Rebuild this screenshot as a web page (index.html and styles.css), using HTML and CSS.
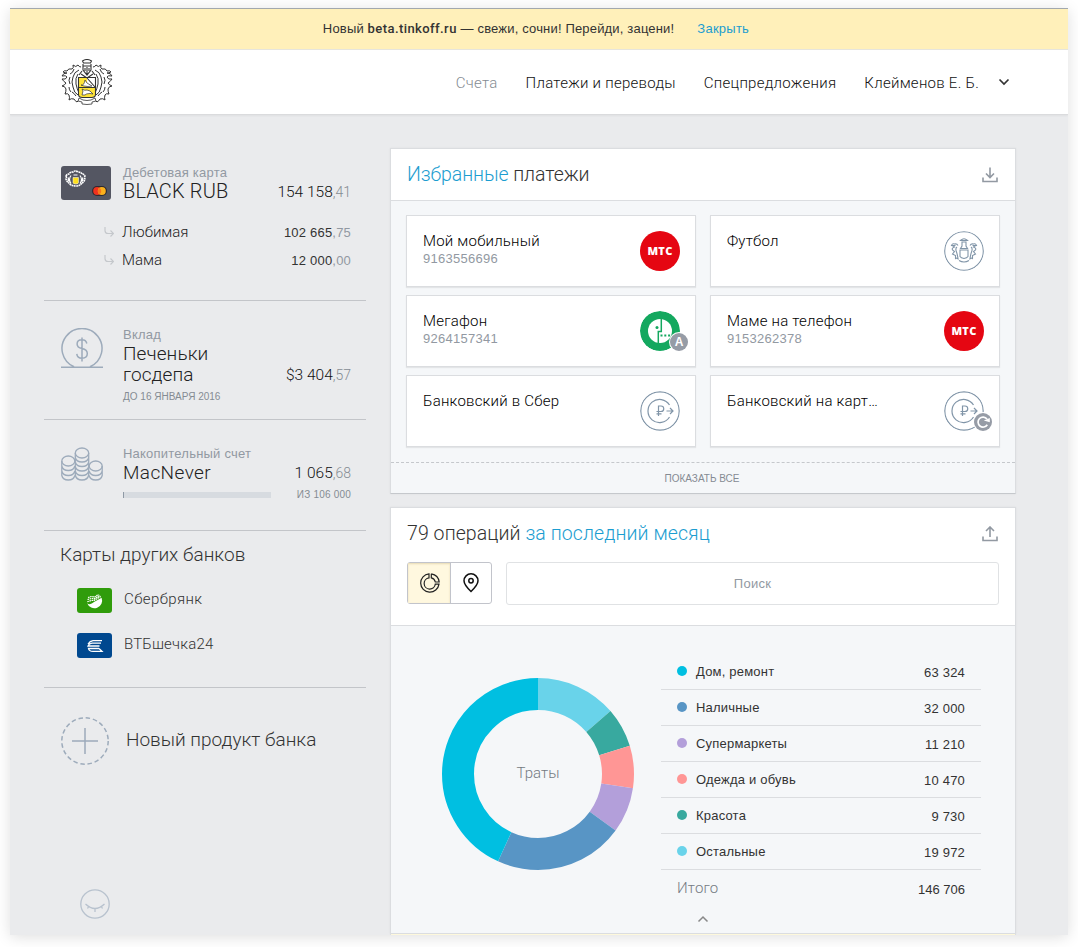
FILE: index.html
```html
<!DOCTYPE html>
<html lang="ru">
<head>
<meta charset="utf-8">
<title>Тинькофф</title>
<link rel="stylesheet" href="styles.css">
</head>
<body>
<svg class="defs" width="0" height="0">
  <symbol id="crest" viewBox="0 0 52 46">
    <g id="crest-wing" fill="none" stroke="currentColor" stroke-width="1">
      <path d="M20 8q-2 0-3-2q-2 3-5 0q1 3-1 4q-4-1-5 2q-3-1-4 1q3 1 4 1q-4 0-5 3q4-1 5 1q-1 3-5 2q2 3 4 4q-1 2-4 3q3 0 4 3q0 3-1 5q3-1 4 1q1 3 0 5q2-2 5-1q1 2 3 3l3-3"/>
      <path d="M18 11q-5 2-6 7q-2 5 0 10q1 6 5 8M17 15q-3 4-2 10q1 5 3 9M13 10q-1 4-4 5M9 18q-2 3 0 7M8 28q0 3 2 5M15 37q-2-3-4-4"/>
    </g>
    <use href="#crest-wing" transform="matrix(-1 0 0 1 52 0)"/>
    <g fill="none" stroke="currentColor" stroke-width="1.100">
      <path d="M21.500 2q4.500-3 9 0l-1 2h-7zM22 5v6l4 5l4-5V5M22 7h8M24 9v3M28 9v3M26 8v8M21 12l-3 4M31 12l3 4M20 15l6 4l6-4"/>
    </g>
    <path d="M17.500 18.500h17v17q0 3-4 3h-9q-4 0-4-3z" fill="#fff"/>
    <path d="M18 19h8v9h8v8q0 2-4 2h-8q-4 0-4-2z" fill="#ffe43a"/>
    <path d="M17.500 18.500h17v17q0 3-4 3h-9q-4 0-4-3zM18 28.500h16M26 19l8 9" fill="none" stroke="currentColor" stroke-width="1.100"/>
    <path d="M20 26q3 1 4-5l2 3l5 3q-4 1-8 0zM21 36l1-4l-1-2q3 2 5 1l3 1l3 3l-3-.5q-4 0-5 1.500z" fill="#fff" stroke="currentColor" stroke-width=".7"/>
    <path d="M18 39l-1 3l4 1v2q5 1 10 0v-2l4-1l-1-3l-4 2q-4 1-8 0z" fill="#fff" stroke="currentColor" stroke-width=".8"/>
  </symbol>
  <symbol id="crest-small" viewBox="0 0 21 17">
    <path d="M1 6q1-2 3-2q1-2 4-2q2-2 5 0q3 0 4 2q2 0 3 2q-1 2 0 3q-1 3-3 4q-2 3-6 3q-5 0-7-3q-2-1-3-4q1-1 0-3z" fill="none" stroke="#fff" stroke-width="1.600" stroke-dasharray="1.800 .5"/>
    <path d="M6 5.500q-3 4 0 8M15 5.500q3 4 0 8M8.500 5h4M3.500 7.500q-.8 2 .5 4M17.500 7.500q.8 2-.5 4" fill="none" stroke="#fff" stroke-width="1.200"/>
    <path d="M8 7.500h5.500v5q0 1.500-2.750 1.500T8 12.500z" fill="#ffe01e" stroke="#fff" stroke-width=".5"/>
  </symbol>
  <symbol id="crest-line" viewBox="0 0 40 40">
    <g fill="none" stroke="#8195a8" stroke-width="1.100">
      <circle cx="20" cy="20" r="19.300"/>
      <path d="M16.500 9.500q3.500-3.500 7 0zM18 11h4v4l1.500 2.500h-7L18 15zM16 19h8v6.500q-1 1.500-4 2q-3-.5-4-2zM15 29.500q5 3 10 0"/>
      <g id="wing-line"><path d="M14 14.500q-1-2-3.500-1.500q-2-1-3 1.500q2 .5 3 1.500q-3 1-2 3l2 1.500l-2 2.500l3 1.500v3q2-1 3 1M13 16q-2 1.500-.5 5q1 3 1.500 6.500M8 14.500h3.500"/></g>
      <use href="#wing-line" transform="matrix(-1 0 0 1 40 0)"/>
    </g>
  </symbol>
  <symbol id="transfer" viewBox="0 0 40 40">
    <g fill="none" stroke="#8195a8" stroke-width="1.200">
      <circle cx="20" cy="20" r="19.200"/>
      <path d="M29.500 14a11.600 11.600 0 1 0 0 12M18.500 25V15h2.500a2.700 2.700 0 0 1 0 5.500h-4.500M16.500 22.800h5M26.500 20h6M30 17l3 3l-3 3"/>
    </g>
  </symbol>
  <symbol id="sub-arrow" viewBox="0 0 10 10">
    <path d="M1 0v3.500q0 3 3 3h5M6.500 3.500l3 3l-3 3" fill="none" stroke="#c5c8cc" stroke-width="1.200"/>
  </symbol>
</svg>

<div class="frame">
  <div class="banner">
    <span class="banner-text">Новый <b>beta.tinkoff.ru</b> — свежи, сочни! Перейди, зацени!</span>
    <a class="banner-close">Закрыть</a>
  </div>
  <header class="header">
    <svg class="logo"><use href="#crest"/></svg>
    <nav class="nav">
      <a class="current">Счета</a><a>Платежи и переводы</a><a>Спецпредложения</a><a>Клейменов Е. Б.</a>
      <svg class="nav-arrow" viewBox="0 0 12 8"><path d="M1.500 1.500L6 6l4.500-4.500" fill="none" stroke="#333" stroke-width="1.700"/></svg>
    </nav>
  </header>

  <div class="content">
    <aside class="sidebar">
      <section class="acc acc-card">
        <div class="acc-main">
          <div class="acc-icon"><div class="card"><svg class="card-crest"><use href="#crest-small"/></svg><svg class="card-mc" viewBox="0 0 15 10"><rect width="15" height="10" rx="5" fill="#2e2a30"/><circle cx="5.200" cy="5" r="4" fill="#f0321e"/><circle cx="9.800" cy="5" r="4" fill="#fbb01c"/><path d="M7.500 1.700a4 4 0 0 1 0 6.600a4 4 0 0 1 0-6.600" fill="#f9751c"/></svg></div></div>
          <div class="acc-body"><div class="label">Дебетовая карта</div><div class="name latin black">BLACK RUB</div></div>
          <div class="amount">154 158<i>,41</i></div>
        </div>
        <div class="sub"><svg><use href="#sub-arrow"/></svg><span>Любимая</span><b>102 665<i>,75</i></b></div>
        <div class="sub"><svg><use href="#sub-arrow"/></svg><span>Мама</span><b>12 000<i>,00</i></b></div>
      </section>

      <section class="acc acc-deposit">
        <div class="acc-main">
          <div class="acc-icon"><svg width="42" height="42" viewBox="0 0 42 42" fill="none" stroke="#9dabbb" stroke-width="1.500"><path d="M0 39.200h42M13 38.800a20 20 0 1 1 16 0M25.800 15.500q-.8-3.700-4.800-3.700q-4.900 0-4.900 4.200q0 3.500 4.900 4.600q5.300 1.200 5.300 5q0 4.700-5.300 4.700q-4.800 0-5.200-4.400M21 9.500v24"/></svg></div>
          <div class="acc-body"><div class="label">Вклад</div><div class="name">Печеньки<br>госдепа</div></div>
          <div class="amount">$3 404<i>,57</i></div>
        </div>
        <div class="note">ДО 16 ЯНВАРЯ 2016</div>
      </section>

      <section class="acc acc-saving">
        <div class="acc-main">
          <div class="acc-icon"><svg width="42" height="34" viewBox="0 0 42 34" fill="none" stroke="#9dabbb" stroke-width="1.300">
            <ellipse cx="21" cy="6" rx="6.700" ry="5"/><ellipse cx="7.300" cy="14" rx="6.500" ry="5"/><ellipse cx="34.700" cy="19" rx="6.500" ry="5"/>
            <path d="M14.300 6v22q1 5 6.700 5t6.700-5V6M14.300 10.500q1 4.500 6.700 4.500t6.700-4.500M14.300 15q1 4.500 6.700 4.500t6.700-4.500M14.300 19.500q1 4.500 6.700 4.500t6.700-4.500M14.300 24q1 4.500 6.700 4.500t6.700-4.500M.8 14v14.500q1 4.500 6.500 4.500t6.500-4.500M.8 19q1 4.500 6.500 4.500t6.500-4.500M.8 24q1 4.500 6.500 4.500t6.500-4.500M28.200 28.500q1 4.500 6.500 4.500t6.500-4.500V19M28.200 24q1 4.500 6.500 4.500t6.500-4.500"/></svg></div>
          <div class="acc-body"><div class="label">Накопительный счет</div><div class="name latin">MacNever</div></div>
          <div class="amount">1 065<i>,68</i></div>
        </div>
        <div class="progress"><div class="bar"></div><span>ИЗ 106 000</span></div>
      </section>

      <section class="acc acc-other">
        <h3>Карты других банков</h3>
        <div class="bank"><svg viewBox="0 0 35 25"><rect width="35" height="25" rx="3" fill="#309c0b"/><path d="M10.200 15.300q1.500 1.200 3.300.7q1.500-.5 3.500-2l7.600-4.200a7.300 7.300 0 1 1-14.400 5.500z" fill="#fff"/><path d="M11 9.500l3.500-1l3 .5l4-2.500M10.500 11.500l4-1l3 .2l5.500-3.400M10.300 13.700l4-1.200l3-.2l6.500-3.800" fill="none" stroke="#fff" stroke-width="1.200" stroke-dasharray="1.600 .6"/></svg><span>Сбербрянк</span></div>
        <div class="bank"><svg viewBox="0 0 35 25"><rect width="35" height="25" rx="3" fill="#00488f"/><path d="M25 7.700H16q-3 .3-5 3.300M24 10.200H15q-3 .3-4 2.800h11.500M22 15.500H11.500q.5 2.700 4.500 2.900h9l-3-2.900" fill="none" stroke="#fff" stroke-width="1.300"/></svg><span>ВТБшечка24</span></div>
      </section>

      <section class="new">
        <svg width="48" height="48" viewBox="0 0 48 48" fill="none" stroke="#9dabbb"><circle cx="24" cy="24" r="23.200" stroke-width="1.500" stroke-dasharray="4.500 2.788"/><path d="M24 11v26M11 24h26" stroke-width="1.500"/></svg>
        <span>Новый продукт банка</span>
      </section>
      <svg class="eye" viewBox="0 0 30 30" fill="none" stroke="#b8c2ce" stroke-width="1.300"><circle cx="15" cy="15" r="14.200"/><path d="M5.500 15q9.500 9 19 0M9 17l-1.500 2.500M15 19.500V23M21 17l1.500 2.500"/></svg>
    </aside>

    <main class="main">
      <section class="panel favorites">
        <div class="panel-head">
          <h2 class="fav-title"><a>Избранные</a> платежи</h2>
          <svg class="io" viewBox="0 0 16 16"><path d="M8 .5v10M4 6.500l4 4l4-4M1 10.500v4h14v-4" fill="none" stroke="#9299a2" stroke-width="1.600"/></svg>
        </div>
        <div class="tiles">
          <div class="tile"><div class="tile-text"><span>Мой мобильный</span><small>9163556696</small></div><div class="round mts">МТС</div></div>
          <div class="tile"><div class="tile-text"><span>Футбол</span></div><svg class="round"><use href="#crest-line"/></svg></div>
          <div class="tile"><div class="tile-text"><span>Мегафон</span><small>9264157341</small></div>
            <div class="round-wrap"><svg class="round" viewBox="0 0 40 40"><circle cx="20" cy="20" r="20" fill="#14a85f"/><circle cx="20" cy="20" r="12" fill="#fff"/><path d="M21.300 8v12.500h-3V32" fill="none" stroke="#14a85f" stroke-width="1.500"/><circle cx="17" cy="16.500" r="1.500" fill="#14a85f"/><path d="M20.500 24.500h11" stroke="#14a85f" stroke-width="2" stroke-dasharray="2 1.800"/></svg><span class="badge">A</span></div></div>
          <div class="tile"><div class="tile-text"><span>Маме на телефон</span><small>9153262378</small></div><div class="round mts">МТС</div></div>
          <div class="tile"><div class="tile-text"><span>Банковский в Сбер</span></div><svg class="round"><use href="#transfer"/></svg></div>
          <div class="tile"><div class="tile-text"><span>Банковский на карт…</span></div>
            <div class="round-wrap"><svg class="round"><use href="#transfer"/></svg><span class="badge"><svg viewBox="0 0 18 18" width="18" height="18"><path d="M13.300 11.700a5 5 0 1 1-.3-5.700" fill="none" stroke="#fff" stroke-width="1.700"/><path d="M9.800 7.500L15.800 9.300V5z" fill="#fff"/></svg></span></div></div>
        </div>
        <div class="show-all">ПОКАЗАТЬ ВСЕ</div>
      </section>

      <section class="panel operations">
        <div class="ops-head">
          <div class="ops-title"><h2>79 операций <a>за последний месяц</a></h2>
            <svg class="io" viewBox="0 0 16 16"><path d="M8 11V1.500M4 5l4-4l4 4M1 10.500v4h14v-4" fill="none" stroke="#9299a2" stroke-width="1.600"/></svg></div>
          <div class="tools">
            <div class="switch">
              <div class="switch-item active"><svg width="20" height="20" viewBox="0 0 20 20" fill="none" stroke="#222" stroke-width="1.200"><path d="M9 .8a9.200 9.200 0 1 0 10 10.400h-3.700a5.600 5.600 0 1 1-6.300-6.300zM11.300.8v4.100q3.300.8 4 4.100h3.900q-.8-7-7.900-8.200"/></svg></div>
              <div class="switch-item"><svg width="16" height="20" viewBox="0 0 16 20" fill="none" stroke="#111" stroke-width="1.500"><path d="M8 18.500Q1 11.800 1 7.800a7 7 0 0 1 14 0Q15 11.800 8 18.500z"/><circle cx="8" cy="7.800" r="2.200"/></svg></div>
            </div>
            <div class="search">Поиск</div>
          </div>
        </div>
        <div class="stats">
          <div class="donut">
            <svg viewBox="0 0 192 192" fill="none" stroke-width="32">
              <g transform="rotate(-90 96 96)">
                <circle cx="96" cy="96" r="80" stroke="#69d3ea" pathLength="146706" stroke-dasharray="19972 146706"/>
                <circle cx="96" cy="96" r="80" stroke="#38a99f" pathLength="146706" stroke-dasharray="9730 146706" stroke-dashoffset="-19972"/>
                <circle cx="96" cy="96" r="80" stroke="#ff9695" pathLength="146706" stroke-dasharray="10470 146706" stroke-dashoffset="-29702"/>
                <circle cx="96" cy="96" r="80" stroke="#b39fda" pathLength="146706" stroke-dasharray="11210 146706" stroke-dashoffset="-40172"/>
                <circle cx="96" cy="96" r="80" stroke="#5895c5" pathLength="146706" stroke-dasharray="32000 146706" stroke-dashoffset="-51382"/>
                <circle cx="96" cy="96" r="80" stroke="#00bfe1" pathLength="146706" stroke-dasharray="63324 146706" stroke-dashoffset="-83382"/>
              </g>
            </svg>
            <span>Траты</span>
          </div>
          <div class="legend">
            <div class="row home"><i></i><span>Дом, ремонт</span><b>63 324</b></div>
            <div class="row cash"><i></i><span>Наличные</span><b>32 000</b></div>
            <div class="row market"><i></i><span>Супермаркеты</span><b>11 210</b></div>
            <div class="row clothes"><i></i><span>Одежда и обувь</span><b>10 470</b></div>
            <div class="row beauty"><i></i><span>Красота</span><b>9 730</b></div>
            <div class="row rest"><i></i><span>Остальные</span><b>19 972</b></div>
            <div class="row total"><span>Итого</span><b>146 706</b></div>
            <svg class="collapse" viewBox="0 0 12 8"><path d="M1.500 6.500L6 2l4.500 4.500" fill="none" stroke="#888" stroke-width="1.500"/></svg>
          </div>
        </div>
      </section>
      <div class="next"></div>
    </main>
  </div>
</div>
</body>
</html>
```
FILE: styles.css
```css
* { box-sizing: border-box; }
body {
  margin: 0;
  padding: 8px 10px 12px;
  height: 947px;
  overflow: hidden;
  background: #fff;
  color: #333;
  font: 13px "Liberation Sans", Arial, sans-serif;
  white-space: nowrap;
}
i { font-style: normal; }
h2, h3 { margin: 0; font-weight: 300; }
a { color: #1c9dd0; }
svg { display: block; flex: none; }
.defs { position: absolute; }

.frame {
  width: 1058px;
  height: 927px;
  overflow: hidden;
  background: #eaebed;
  border-top: 1px solid #a2a8ae;
  box-shadow: 0 2px 14px rgba(0, 0, 0, .13);
}
.banner {
  height: 41px;
  display: flex;
  justify-content: center;
  gap: 23px;
  line-height: 39px;
  padding-right: 6px;
  background: #fff0ba;
  border-bottom: 1px solid #e6e5dd;
  letter-spacing: .17px;
}
.banner b { font-family: Roboto, sans-serif; font-weight: 500; letter-spacing: .42px; }
.banner-close { letter-spacing: .25px; }

.header {
  height: 65px;
  display: flex;
  justify-content: space-between;
  align-items: flex-start;
  padding: 9px 58px 0 51px;
  background: #fff;
  border-bottom: 1px solid #dadbdd;
  box-shadow: 0 1px 2px rgba(0, 0, 0, .05);
}
.logo { width: 52px; height: 46px; color: #333; }
.nav {
  display: flex;
  align-items: center;
  height: 46px;
  gap: 28px;
  font: 300 15px Roboto, sans-serif;
  letter-spacing: .27px;
}
.nav a { color: #111; padding-top: 2px; }
.nav a.current { color: #858b93; }
.nav-arrow { width: 12px; height: 8px; margin-left: -9px; }

.content { display: flex; height: 820px; }
.sidebar { width: 322px; margin-left: 34px; }
.acc { border-bottom: 1px solid #c3c5c9; padding: 0 15px 0 17px; }
.acc-main { display: flex; }
.acc-icon { width: 62px; flex: none; }
.acc-body { flex: 1; }
.label { height: 16px; line-height: 16px; color: #9299a2; letter-spacing: .22px; }
.name { color: #222; font: 300 19px/21px Roboto, sans-serif; letter-spacing: .1px; }
.name.latin { letter-spacing: .4px; }
.name.black { font-size: 20px; letter-spacing: .15px; }
.amount { align-self: flex-end; color: #111; font: 300 15.500px/20px Roboto, sans-serif; letter-spacing: 0; }
.amount i { color: #858b93; font-size: 14px; }

.acc-card { height: 186px; padding-top: 50px; }
.card { position: relative; width: 50px; height: 34px; margin-top: 1px; border-radius: 3px; background: #545662; }
.card-crest { position: absolute; left: 4px; top: 4px; width: 21px; height: 17px; }
.card-mc { position: absolute; right: 4px; bottom: 4px; width: 15px; height: 10px; }
.sub { display: flex; align-items: center; height: 28px; padding-left: 43px; }
.acc-main + .sub { margin-top: 16px; }
.sub svg { width: 10px; height: 10px; margin-right: 8px; }
.sub span { flex: 1; font: 300 15px Roboto, sans-serif; color: #222; }
.sub b { font-weight: 400; letter-spacing: .2px; }
.sub i { color: #9299a2; }

.acc-deposit { height: 119px; padding-top: 26px; }
.acc-deposit .acc-icon, .acc-saving .acc-icon { padding-top: 1px; }
.note { padding: 6px 0 0 62px; font-size: 10px; color: #858b93; }
.acc-saving { height: 111px; padding-top: 26px; }
.progress { display: flex; align-items: center; justify-content: space-between; padding: 6px 0 0 62px; font-size: 10px; color: #858b93; letter-spacing: .2px; }
.bar { width: 148px; height: 6px; margin-top: 1px; background: #d7dbe0; border-left: 1px solid #8f99a5; }

.acc-other { height: 157px; padding-top: 12px; }
.acc-other h3 { margin-left: -1px; font: 300 19px/24px Roboto, sans-serif; }
.bank { display: flex; gap: 12px; align-items: flex-start; margin: 21px 0 0 16px; height: 24px; }
.bank svg { width: 35px; height: 25px; }
.bank span { font: 300 15px/22px Roboto, sans-serif; letter-spacing: .4px; }
.bank:last-child span { letter-spacing: .2px; }

.new { display: flex; align-items: center; gap: 17px; margin: 29px 0 0 17px; font: 300 19px Roboto, sans-serif; }
.new span { padding-bottom: 4px; }
.eye { width: 30px; height: 30px; margin: 124px 0 0 36px; }

.main { width: 626px; margin: 33px 0 0 24px; }
.panel { border: 1px solid #dbdde0; background: #f5f7f9; box-shadow: 0 0 2px rgba(0, 0, 0, .06); }
.favorites { height: 346px; border-bottom-color: #c5c8cc; }
.panel-head { display: flex; justify-content: space-between; align-items: center; height: 52px; padding: 0 17px 0 16px; background: #fff; border-bottom: 1px solid #dbdde0; }
h2 { font: 300 19.500px/24px Roboto, sans-serif; letter-spacing: .08px; }
h2.fav-title { letter-spacing: -.08px; }
.io { width: 16px; height: 16px; }
.tiles { display: grid; grid-template-columns: 290px 290px; grid-auto-rows: 72px; gap: 8px 14px; padding: 14px 15px 0; }
.tile { display: flex; justify-content: space-between; padding: 15px 15px 0 16px; background: #fff; border: 1px solid #dbdde0; box-shadow: 0 1px 1px rgba(0, 0, 0, .07); }
.tile-text span { display: block; color: #000; font: 300 15px/20px Roboto, sans-serif; letter-spacing: .22px; }
.tile-text small { display: block; font-size: 13px; line-height: 15px; color: #9299a2; letter-spacing: .27px; }
.round { width: 40px; height: 40px; border-radius: 50%; }
.round-wrap { position: relative; width: 40px; height: 40px; }
.mts { background: #e50612; color: #fff; text-align: center; font: 800 11px/40px "Open Sans", "Noto Sans", sans-serif; letter-spacing: .3px; }
.badge { position: absolute; left: 30px; top: 22px; width: 18px; height: 18px; border-radius: 50%; background: #969ca6; box-shadow: 0 0 0 1px #fff; color: #fff; text-align: center; font: 700 12px/18px "Liberation Sans", sans-serif; }
.show-all { margin-top: 15px; padding-right: 2px; border-top: 1px dashed #c5c8cc; text-align: center; font-size: 10px; line-height: 31px; color: #858b93; }

.operations { margin-top: 13px; height: 427px; }
.ops-head { height: 118px; padding: 14px 16px 0; background: #fff; border-bottom: 1px solid #dbdde0; }
.ops-title { display: flex; justify-content: space-between; align-items: center; padding-right: 1px; }
.tools { display: flex; gap: 14px; margin-top: 16px; }
.switch { display: flex; width: 85px; height: 42px; border: 1px solid #c2c4cb; border-radius: 3px; }
.switch-item { flex: 1; display: flex; align-items: center; justify-content: center; }
.switch-item.active { flex: none; width: 43px; padding-left: 2px; background: #fff8df; border-right: 1px solid #c2c4cb; box-shadow: inset 0 1px 2px rgba(160, 130, 50, .25); }
.search { flex: 1; height: 43px; border: 1px solid #e0e2e4; border-radius: 3px; text-align: center; line-height: 41px; color: #9299a2; letter-spacing: .3px; }

.stats { display: flex; padding: 28px 34px 0 51px; justify-content: space-between; }
.donut { display: grid; width: 192px; height: 192px; margin-top: 24px; place-items: center; }
.donut svg, .donut span { grid-area: 1 / 1; }
.donut span { padding-bottom: 2px; font: 300 15px Roboto, sans-serif; color: #747a82; }
.legend { width: 320px; }
.row { display: flex; height: 36px; align-items: center; padding: 0 16px; border-bottom: 1px solid #dbdde0; letter-spacing: .2px; }
.row i { width: 10px; height: 10px; margin: -1px 9px 0 0; border-radius: 50%; }
.row span { flex: 1; }
.row b { font-weight: 400; padding-top: 2px; }
.home i { background: #00bfe1; }
.cash i { background: #5895c5; }
.market i { background: #b39fda; }
.clothes i { background: #ff9695; }
.beauty i { background: #38a99f; }
.rest i { background: #69d3ea; }
.total { border: 0; }
.total span { font: 300 15px Roboto, sans-serif; color: #747a82; }
.total b { padding-top: 3px; letter-spacing: 0; }
.collapse { width: 12px; height: 8px; margin: 9px 0 0 36px; }
.next { height: 10px; background: #fdf8dc; border-left: 1px solid #dbdde0; border-right: 1px solid #dbdde0; }
```
